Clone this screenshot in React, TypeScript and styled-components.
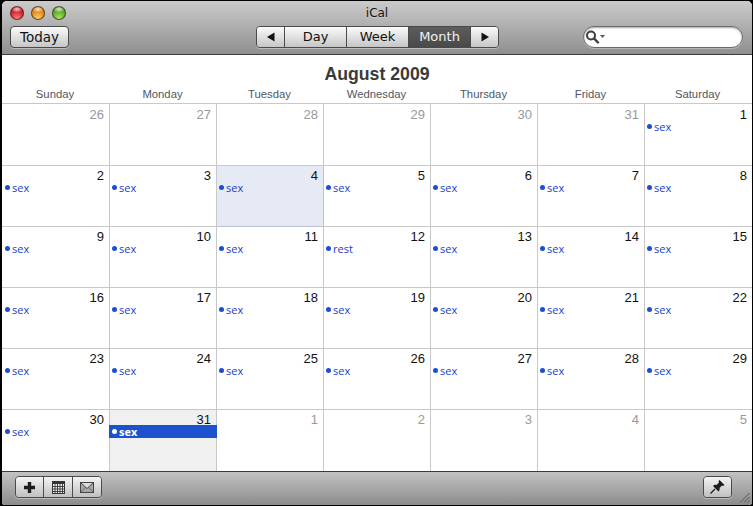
import React from 'react'
import styled, { createGlobalStyle } from 'styled-components'

const GlobalStyle = createGlobalStyle`
	html, body {
		margin: 0;
		padding: 0;
		background: #000;
	}
	body {
		font-family: "Liberation Sans", Arial, sans-serif;
	}
`

const Window = styled.div`
	box-sizing: border-box;
	width: 750px;
	height: 504px;
	margin: 1px 0 0 2px;
	display: flex;
	flex-direction: column;
	overflow: hidden;
	border-radius: 5px 5px 3px 3px;
	background: #fff;
`

const TitleBar = styled.header`
	box-sizing: border-box;
	flex: none;
	height: 54px;
	padding: 2px 8px 0;
	display: flex;
	flex-direction: column;
	background: linear-gradient(#cbcbcb, #8f8f8f);
	border-bottom: 1px solid #3c3c3c;
`

const TitleRow = styled.div`
	display: grid;
	grid-template-columns: 1fr auto 1fr;
	align-items: center;
	height: 20px;
`

const Lights = styled.div`
	display: flex;
	gap: 7px;
`

const Light = styled.span<{ $color: string; $glow: string }>`
	width: 14px;
	height: 14px;
	border-radius: 50%;
	box-sizing: border-box;
	border: 1px solid rgba(50, 30, 30, 0.7);
	background:
		radial-gradient(ellipse 50% 28% at 50% 18%, rgba(255, 255, 255, 0.8), transparent),
		radial-gradient(circle at 50% 95%, ${({ $glow }) => $glow} 0%, ${({ $color }) => $color} 72%);
`

const WindowTitle = styled.div`
	font-family: "DejaVu Sans", sans-serif;
	font-size: 12px;
	color: #111;
	line-height: 20px;
	text-shadow: 0 1px 0 rgba(255, 255, 255, 0.3);
`

const ToolRow = styled.div`
	display: grid;
	grid-template-columns: 1fr auto 1fr;
	align-items: center;
	margin-top: 3px;
`

const PlainButton = styled.button`
	justify-self: start;
	box-sizing: border-box;
	width: 59px;
	height: 22px;
	padding: 0 0 1px;
	font-family: "DejaVu Sans", sans-serif;
	font-size: 13.5px;
	color: #111;
	border: 1px solid #4a4a4a;
	border-radius: 4px;
	background: linear-gradient(#fbfbfb, #c6c6c6);
	box-shadow: 0 1px 0 rgba(255, 255, 255, 0.35);
`

const Segments = styled.div`
	display: flex;
	height: 22px;
	box-sizing: border-box;
	border: 1px solid #4a4a4a;
	border-radius: 4px;
	overflow: hidden;
	box-shadow: 0 1px 0 rgba(255, 255, 255, 0.35);
`

const ViewSegments = styled(Segments)`
	margin-left: 1px;
`

const Segment = styled.div<{ $width: number; $active?: boolean }>`
	box-sizing: border-box;
	width: ${({ $width }) => $width}px;
	padding-bottom: 1px;
	display: flex;
	align-items: center;
	justify-content: center;
	font-family: "DejaVu Sans", sans-serif;
	font-size: 13px;
	color: ${({ $active }) => ($active ? '#f2f2f2' : '#111')};
	background: ${({ $active }) => ($active ? 'linear-gradient(#5c5c5c, #4a4a4a)' : 'linear-gradient(#fbfbfb, #c6c6c6)')};
	border-right: 1px solid #4a4a4a;

	&:last-child {
		border-right: none;
	}
`

const SearchField = styled.div`
	justify-self: end;
	box-sizing: border-box;
	width: 160px;
	height: 22px;
	margin-right: 1px;
	padding-left: 2px;
	display: flex;
	align-items: center;
	background: #fff;
	border: 1px solid #6a6a6a;
	border-radius: 11px;
	box-shadow: inset 0 1px 2px rgba(0, 0, 0, 0.35), 0 1px 0 rgba(255, 255, 255, 0.3);
`

const MonthHeader = styled.div`
	flex: none;
	height: 49px;
	box-sizing: border-box;
	display: flex;
	flex-direction: column;
	border-bottom: 1px solid #c8c8c8;
`

const MonthTitle = styled.h1`
	margin: 8px 0 0;
	font-size: 17.7px;
	line-height: 22px;
	font-weight: 700;
	text-align: center;
	color: #3a3a3a;
`

const WeekDays = styled.div`
	display: grid;
	grid-template-columns: 108px repeat(6, 107px);
	margin-top: 2px;
`

const WeekDay = styled.div`
	padding-right: 2px;
	font-size: 11.3px;
	line-height: 14px;
	text-align: center;
	color: #4e5763;
`

const MonthGrid = styled.div`
	flex: none;
	display: grid;
	grid-template-columns: 108px repeat(6, 107px);
	grid-template-rows: 62px repeat(5, 61px);
`

const Cell = styled.div<{ $bg?: string; $firstCol: boolean; $lastCol: boolean; $lastRow: boolean; $firstRow: boolean; $today?: boolean }>`
	box-sizing: border-box;
	padding-top: ${({ $firstRow }) => ($firstRow ? '3px' : '2px')};
	padding-left: ${({ $firstCol }) => ($firstCol ? '1px' : '0')};
	background: ${({ $bg }) => $bg || '#fff'};
	border-right: ${({ $lastCol, $today }) => ($lastCol ? 'none' : `1px solid ${$today ? '#bcc0cf' : '#c8c8c8'}`)};
	border-bottom: ${({ $lastRow, $today }) => ($lastRow ? 'none' : `1px solid ${$today ? '#bcc0cf' : '#c8c8c8'}`)};
`

const DayNumber = styled.div<{ $muted: boolean }>`
	height: 15px;
	padding-right: 5px;
	font-size: 13px;
	line-height: 15px;
	text-align: right;
	color: ${({ $muted }) => ($muted ? '#999' : '#111')};
`

const EventRow = styled.div<{ $selected: boolean }>`
	display: flex;
	align-items: center;
	gap: 2px;
	height: 13px;
	margin-top: -2px;
	margin-left: ${({ $selected }) => ($selected ? '-1px' : '0')};
	margin-right: ${({ $selected }) => ($selected ? '-1px' : '0')};
	padding-left: ${({ $selected }) => ($selected ? '3px' : '2px')};
	font-family: "Open Sans", sans-serif;
	font-size: 11px;
	line-height: 13px;
	font-weight: ${({ $selected }) => ($selected ? 700 : 400)};
	color: ${({ $selected }) => ($selected ? '#fff' : '#1442c8')};
	background: ${({ $selected }) => ($selected ? '#1d52cf' : 'transparent')};
	position: relative;
`

const EventDot = styled.span<{ $selected: boolean }>`
	width: 5px;
	height: 5px;
	border-radius: 50%;
	background: ${({ $selected }) => ($selected ? '#fff' : '#1c4fd0')};
`

const BottomBar = styled.footer`
	box-sizing: border-box;
	flex: 1;
	display: flex;
	align-items: flex-start;
	justify-content: space-between;
	padding: 4px 20px 0 13px;
	background: linear-gradient(#c2c2c2, #8c8c8c);
	border-top: 1px solid #3c3c3c;
	position: relative;
`

const IconSegment = styled.div<{ $width: number }>`
	box-sizing: border-box;
	width: ${({ $width }) => $width}px;
	display: flex;
	align-items: center;
	justify-content: center;
	background: linear-gradient(#f4f4f4, #c0c0c0);
	border-right: 1px solid #4a4a4a;

	&:last-child {
		border-right: none;
	}
`

const Grip = styled.svg`
	position: absolute;
	right: 2px;
	bottom: 2px;
`

const Triangle = ({ left }: { left?: boolean }) => (
	<svg width="10" height="10" viewBox="0 0 10 10">
		<path d={left ? 'M8.5 0.5V9.5L1 5Z' : 'M1.5 0.5V9.5L9 5Z'} fill="#111" />
	</svg>
)

const SearchIcon = () => (
	<svg width="22" height="14" viewBox="0 0 22 14">
		<circle cx="5" cy="5.5" r="4" fill="none" stroke="#3d3d3d" strokeWidth="2" />
		<path d="M8.2 8.7L12 12.5" stroke="#3d3d3d" strokeWidth="2.4" strokeLinecap="round" />
		<path d="M14 5H19L16.5 8Z" fill="#555" />
	</svg>
)

const PlusIcon = () => (
	<svg width="13" height="13" viewBox="0 0 13 13">
		<path d="M4.8 1H8.2V4.8H12V8.2H8.2V12H4.8V8.2H1V4.8H4.8Z" fill="#1c1c1c" />
	</svg>
)

const CalendarIcon = () => (
	<svg width="13" height="13" viewBox="0 0 13 13">
		<rect x="0.5" y="0.5" width="12" height="12" fill="#eee" stroke="#333" />
		<rect x="0.5" y="0.5" width="12" height="2.5" fill="#333" />
		<path d="M0.5 5.5H12.5M0.5 8H12.5M0.5 10.5H12.5M3 3V12.5M5.5 3V12.5M8 3V12.5M10.5 3V12.5" stroke="#333" strokeWidth="0.9" fill="none" />
	</svg>
)

const MailIcon = () => (
	<svg width="14" height="11" viewBox="0 0 14 11">
		<rect x="0.5" y="0.5" width="13" height="10" fill="#a8a8a8" stroke="#444" />
		<path d="M1 1L7 6.5L13 1" fill="#dcdcdc" stroke="#444" strokeWidth="1" />
		<path d="M1 10L5.5 5.2M13 10L8.5 5.2" stroke="#555" strokeWidth="0.8" />
	</svg>
)

const PinIcon = () => (
	<svg width="17" height="16" viewBox="0 0 17 16">
		<path d="M10.5 1L15.5 6L14 7L13 6.5L10.5 9C11 10.5 10.5 11.5 9.5 12.5L4 7C5 6 6.2 5.6 7.5 6L10 3.5L9.5 2.3Z" fill="#1c1c1c" />
		<path d="M6 10L1.5 14.5" stroke="#1c1c1c" strokeWidth="1.3" />
	</svg>
)

type Day = {
	label: number
	muted?: boolean
	event?: string
	today?: boolean
	selected?: boolean
}

const weekDayNames = ['Sunday', 'Monday', 'Tuesday', 'Wednesday', 'Thursday', 'Friday', 'Saturday']

const buildDays = (): Day[] => {
	const days: Day[] = [26, 27, 28, 29, 30, 31].map((label) => ({ label, muted: true }))
	for (let label = 1; label <= 31; label++) {
		days.push({
			label,
			event: label === 12 ? 'rest' : 'sex',
			today: label === 4,
			selected: label === 31,
		})
	}
	;[1, 2, 3, 4, 5].forEach((label) => days.push({ label, muted: true }))
	return days
}

function App() {
	const days = buildDays()
	return (
		<>
			<GlobalStyle />
			<Window>
				<TitleBar>
					<TitleRow>
						<Lights>
							<Light $color="#c8101c" $glow="#ff7a7a" />
							<Light $color="#d97a10" $glow="#ffd060" />
							<Light $color="#4f9a1e" $glow="#a8e860" />
						</Lights>
						<WindowTitle>iCal</WindowTitle>
						<span />
					</TitleRow>
					<ToolRow>
						<PlainButton>Today</PlainButton>
						<ViewSegments>
							<Segment $width={28}><Triangle left /></Segment>
							<Segment $width={62}>Day</Segment>
							<Segment $width={62}>Week</Segment>
							<Segment $width={62} $active>Month</Segment>
							<Segment $width={27}><Triangle /></Segment>
						</ViewSegments>
						<SearchField><SearchIcon /></SearchField>
					</ToolRow>
				</TitleBar>
				<MonthHeader>
					<MonthTitle>August 2009</MonthTitle>
					<WeekDays>
						{weekDayNames.map((name) => <WeekDay key={name}>{name}</WeekDay>)}
					</WeekDays>
				</MonthHeader>
				<MonthGrid>
					{days.map((day, index) => (
						<Cell
							key={index}
							$bg={day.today ? '#e6eaf5' : day.selected ? '#f0f0f0' : undefined}
							$today={day.today}
							$firstRow={index < 7}
							$lastRow={index >= 35}
							$firstCol={index % 7 === 0}
							$lastCol={index % 7 === 6}
						>
							<DayNumber $muted={!!day.muted}>{day.label}</DayNumber>
							{day.event && (
								<EventRow $selected={!!day.selected}>
									<EventDot $selected={!!day.selected} />
									{day.event}
								</EventRow>
							)}
						</Cell>
					))}
				</MonthGrid>
				<BottomBar>
					<Segments>
						<IconSegment $width={28}><PlusIcon /></IconSegment>
						<IconSegment $width={29}><CalendarIcon /></IconSegment>
						<IconSegment $width={28}><MailIcon /></IconSegment>
					</Segments>
					<Segments>
						<IconSegment $width={27}><PinIcon /></IconSegment>
					</Segments>
					<Grip width="11" height="11" viewBox="0 0 11 11">
						<path d="M1 10.5L10.5 1M5 10.5L10.5 5M8.5 10.5L10.5 8.5" stroke="#555" strokeWidth="1" />
					</Grip>
				</BottomBar>
			</Window>
		</>
	)
}

export default App
